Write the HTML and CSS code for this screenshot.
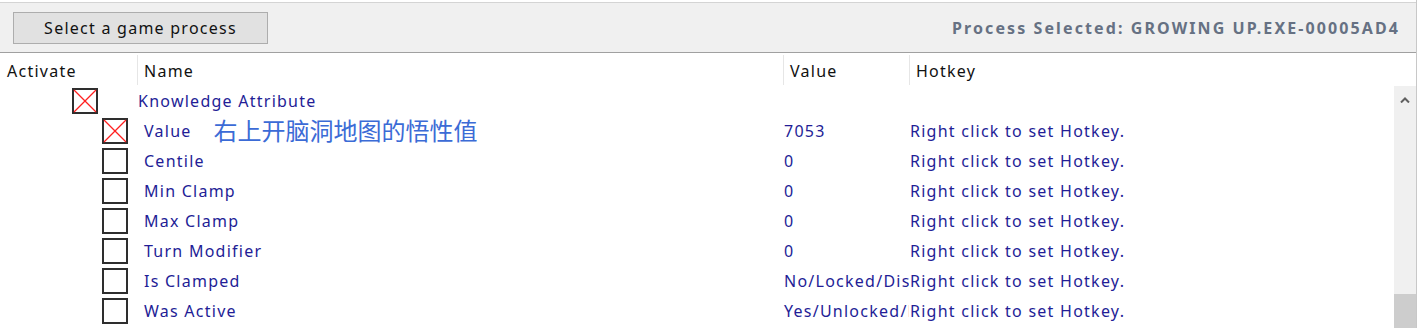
FILE: index.html
```html
<!DOCTYPE html>
<html>
<head>
	<meta charset="utf-8">
	<title>Trainer</title>
	<link rel="stylesheet" href="styles.css">
</head>
<body>
	<div class="window">
		<div class="toolbar">
			<button class="select-btn" type="button">Select a game process</button>
			<span class="process">Process Selected: GROWING UP.EXE-00005AD4</span>
		</div>

		<div class="header">
			<div class="hcell">Activate</div>
			<div class="hcell">Name</div>
			<div class="hcell">Value</div>
			<div class="hcell">Hotkey</div>
		</div>

		<div class="body">
			<div class="rows">
				<div class="row">
					<div class="check lvl0"><svg class="box on" viewBox="0 0 26 26"><rect x="1" y="1" width="24" height="24"/><line x1="2" y1="2" x2="24" y2="24"/><line x1="24" y1="2" x2="2" y2="24"/></svg></div>
					<div class="name parent">Knowledge Attribute</div>
					<div class="val"></div>
					<div class="hot"></div>
				</div>
				<div class="row">
					<div class="check lvl1"><svg class="box on" viewBox="0 0 26 26"><rect x="1" y="1" width="24" height="24"/><line x1="2" y1="2" x2="24" y2="24"/><line x1="24" y1="2" x2="2" y2="24"/></svg></div>
					<div class="name">Value<span class="note">右上开脑洞地图的悟性值</span></div>
					<div class="val">7053</div>
					<div class="hot">Right click to set Hotkey.</div>
				</div>
				<div class="row">
					<div class="check lvl1"><svg class="box" viewBox="0 0 26 26"><rect x="1" y="1" width="24" height="24"/></svg></div>
					<div class="name">Centile</div>
					<div class="val">0</div>
					<div class="hot">Right click to set Hotkey.</div>
				</div>
				<div class="row">
					<div class="check lvl1"><svg class="box" viewBox="0 0 26 26"><rect x="1" y="1" width="24" height="24"/></svg></div>
					<div class="name">Min Clamp</div>
					<div class="val">0</div>
					<div class="hot">Right click to set Hotkey.</div>
				</div>
				<div class="row">
					<div class="check lvl1"><svg class="box" viewBox="0 0 26 26"><rect x="1" y="1" width="24" height="24"/></svg></div>
					<div class="name">Max Clamp</div>
					<div class="val">0</div>
					<div class="hot">Right click to set Hotkey.</div>
				</div>
				<div class="row">
					<div class="check lvl1"><svg class="box" viewBox="0 0 26 26"><rect x="1" y="1" width="24" height="24"/></svg></div>
					<div class="name">Turn Modifier</div>
					<div class="val">0</div>
					<div class="hot">Right click to set Hotkey.</div>
				</div>
				<div class="row">
					<div class="check lvl1"><svg class="box" viewBox="0 0 26 26"><rect x="1" y="1" width="24" height="24"/></svg></div>
					<div class="name">Is Clamped</div>
					<div class="val">No/Locked/Disabled</div>
					<div class="hot">Right click to set Hotkey.</div>
				</div>
				<div class="row">
					<div class="check lvl1"><svg class="box" viewBox="0 0 26 26"><rect x="1" y="1" width="24" height="24"/></svg></div>
					<div class="name">Was Active</div>
					<div class="val">Yes/Unlocked/Enabled</div>
					<div class="hot">Right click to set Hotkey.</div>
				</div>
			</div>

			<div class="scrollbar">
				<svg class="arrow" viewBox="0 0 10 6"><polyline points="1,5.5 5,1.5 9,5.5"/></svg>
				<div class="track"></div>
				<div class="thumb"></div>
			</div>
		</div>
	</div>
</body>
</html>
```

FILE: styles.css
```css
body {
	margin: 0;
	background: #fff;
	font-family: "Noto Sans", "Noto Sans CJK SC", sans-serif;
	font-size: 16px;
	letter-spacing: 1.25px;
	overflow: hidden;
}

/* ----------- window ----------- */
.window {
	width: 1416px;
	height: 328px;
	border-right: 1px solid #c8c8c8;
	display: flex;
	flex-direction: column;
}

.toolbar {
	margin-top: 2px;
	height: 49px;
	border-top: 1px solid #d4d4d4;
	border-bottom: 1px solid #a0a0a0;
	background: #f0f0f0;
	display: flex;
	align-items: center;
	justify-content: space-between;
	padding: 0 16px 0 13px;
	flex: none;
}

.select-btn {
	width: 255px;
	height: 32px;
	margin-top: 1px;
	background: #e1e1e1;
	border: 1px solid #adadad;
	font-family: inherit;
	font-size: 16px;
	letter-spacing: 1.25px;
	color: #111;
	padding: 0;
}

.process {
	font-weight: bold;
	color: #667183;
	font-size: 16px;
	letter-spacing: 2.1px;
	margin-top: 1px;
}

/* ----------- list ----------- */
.header {
	height: 33px;
	display: grid;
	grid-template-columns: 137px 646px 126px 1fr;
	flex: none;
	color: #111;
}

.hcell {
	padding: 5px 0 0 6px;
	margin: 2px 0 1px;
	border-left: 1px solid #e6e6e6;
}

.hcell:first-child {
	border-left: none;
	padding-left: 7px;
}

.body {
	flex: 1;
	display: flex;
	min-height: 0;
}

.rows {
	flex: 1;
}

.row {
	height: 30px;
	display: grid;
	grid-template-columns: 137px 646px 126px 1fr;
	align-items: center;
	color: #231d96;
	white-space: nowrap;
}

.check {
	display: flex;
}

.check.lvl0 { padding-left: 72px; }
.check.lvl1 { padding-left: 102px; }

.box {
	width: 26px;
	height: 26px;
}

.box rect {
	fill: #fff;
	stroke: #2e2e2e;
	stroke-width: 2;
}

.box line {
	stroke: #ff2020;
	stroke-width: 1.2;
}

.name {
	padding-left: 7px;
	display: flex;
	align-items: center;
	height: 30px;
}

.name.parent {
	padding-left: 1px;
}

.note {
	margin-left: 22px;
	font-size: 24px;
	line-height: 24px;
	letter-spacing: 0;
	color: #3b6bd6;
	font-family: "Noto Sans CJK SC", sans-serif;
	margin-top: -2px;
}

.val {
	padding-left: 1px;
	overflow: hidden;
}

.hot {
	padding-left: 1px;
}

/* ----------- scrollbar ----------- */
.scrollbar {
	width: 22px;
	background: #f0f0f0;
	display: flex;
	flex-direction: column;
	align-items: center;
}

.arrow {
	width: 10px;
	height: 6px;
	margin-top: 11px;
}

.arrow polyline {
	fill: none;
	stroke: #606060;
	stroke-width: 2;
}

.track {
	flex: 1;
}

.thumb {
	width: 22px;
	height: 34px;
	background: #cdcdcd;
}
```
